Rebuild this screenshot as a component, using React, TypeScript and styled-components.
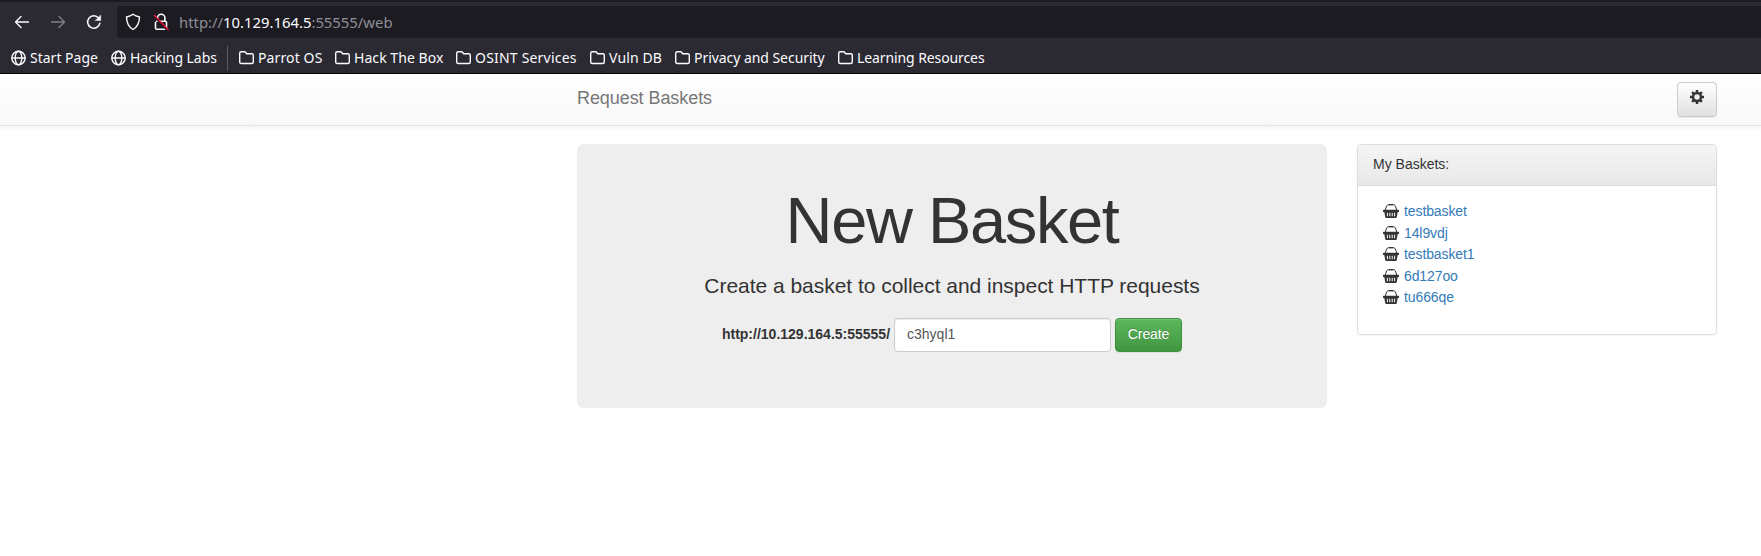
import React from "react";
import styled, { createGlobalStyle } from "styled-components";

const GlobalStyle = createGlobalStyle`
  * { box-sizing: border-box; }
  body {
    margin: 0;
    background: #fff;
    color: #333;
    font: 14px/20px "Liberation Sans", Arial, sans-serif;
    overflow: hidden;
  }
`;

const Page = styled.div`
  height: 556px;
  overflow: hidden;
`;

const Browser = styled.header`
  height: 74px;
  background: #2b2a33;
  border-top: 2px solid #1c1b22;
  border-bottom: 1px solid #0c0c0d;
  color: #fbfbfe;
  font-family: "Noto Sans", sans-serif;
`;

const Toolbar = styled.div`
  display: flex;
  align-items: center;
  height: 40px;
  padding: 0 0 0 14px;
`;

const NavIcon = styled.span<{ $dim?: boolean }>`
  display: flex;
  width: 16px;
  margin-right: 20px;
  opacity: ${(p) => (p.$dim ? 0.4 : 1)};
`;

const AddressBar = styled.div`
  display: flex;
  align-items: center;
  flex: 1;
  height: 32px;
  margin-left: -5px;
  padding-left: 8px;
  border-radius: 4px 0 0 4px;
  background: #1c1b22;
`;

const AddressIcon = styled.span`
  display: flex;
  margin-right: 12px;
`;

const Address = styled.span`
  margin-left: -2px;
  color: #8f8f96;
  font-size: 14.85px;
  line-height: 20px;
  white-space: nowrap;
`;

const Host = styled.span`
  color: #fbfbfe;
`;

const Bookmarks = styled.nav`
  display: flex;
  align-items: center;
  height: 31px;
  padding: 1px 0 0 11px;
`;

const Bookmark = styled.span<{ $width: number; $tracking?: number }>`
  display: flex;
  align-items: center;
  gap: 4px;
  flex: none;
  width: ${(p) => p.$width}px;
  font-size: 14px;
  letter-spacing: ${(p) => p.$tracking ?? 0}px;
  line-height: 20px;
  white-space: nowrap;
`;

const Divider = styled.span`
  width: 1px;
  height: 25px;
  margin-right: 11px;
  background: #5b5b66;
`;

const Navbar = styled.div`
  display: flex;
  justify-content: space-between;
  height: 52px;
  padding: 8px 44px 0 577px;
  border-bottom: 1px solid #e4e4e4;
  background: linear-gradient(#fff, #f8f8f8);
  box-shadow: 0 1px 5px rgba(0, 0, 0, 0.075);
`;

const Brand = styled.span`
  padding-top: 6px;
  color: #777;
  font-size: 18px;
  letter-spacing: -0.07px;
  line-height: 20px;
  text-shadow: 0 1px 0 rgba(255, 255, 255, 0.25);
`;

const SettingsButton = styled.button`
  display: flex;
  justify-content: center;
  width: 40px;
  height: 35px;
  padding: 7px 0 0;
  border: 1px solid #ccc;
  border-radius: 4px;
  background: linear-gradient(#fff, #e0e0e0);
  box-shadow: inset 0 1px 0 rgba(255, 255, 255, 0.15), 0 1px 1px rgba(0, 0, 0, 0.075);
`;

const Content = styled.main`
  display: flex;
  align-items: flex-start;
  gap: 30px;
  padding: 18px 44px 0 577px;
`;

const Jumbotron = styled.section`
  width: 750px;
  height: 264px;
  padding-top: 42px;
  border-radius: 6px;
  background: #eee;
  text-align: center;
`;

const Title = styled.h1`
  margin: 0;
  font-size: 65px;
  font-weight: 400;
  letter-spacing: -1.4px;
  line-height: 69px;
`;

const Lead = styled.p`
  margin: 16px 0 0;
  font-size: 21px;
  letter-spacing: -0.03px;
  line-height: 30px;
`;

const Form = styled.form`
  display: flex;
  justify-content: center;
  gap: 4px;
  margin-top: 17px;
`;

const Label = styled.label`
  font-weight: 700;
  line-height: 33px;
`;

const Input = styled.input`
  width: 217px;
  height: 34px;
  padding: 0 12px 2px;
  border: 1px solid #ccc;
  border-radius: 4px;
  background: #fff;
  box-shadow: inset 0 1px 1px rgba(0, 0, 0, 0.075);
  color: #555;
  font: inherit;
`;

const CreateButton = styled.button`
  width: 67px;
  height: 34px;
  padding: 0 0 2px;
  border: 1px solid #3e8f3e;
  border-radius: 4px;
  background: linear-gradient(#5cb85c, #419641);
  box-shadow: inset 0 1px 0 rgba(255, 255, 255, 0.15), 0 1px 1px rgba(0, 0, 0, 0.075);
  color: #fff;
  font: inherit;
  letter-spacing: -0.1px;
  text-shadow: 0 -1px 0 rgba(0, 0, 0, 0.2);
`;

const Panel = styled.aside`
  width: 360px;
  height: 191px;
  border: 1px solid #ddd;
  border-radius: 4px;
  box-shadow: 0 1px 2px rgba(0, 0, 0, 0.05);
`;

const PanelHeading = styled.div`
  height: 41px;
  padding: 9px 15px;
  border-bottom: 1px solid #ddd;
  border-radius: 3px 3px 0 0;
  background: linear-gradient(#f5f5f5, #e8e8e8);
`;

const BasketList = styled.ul`
  margin: 0;
  padding: 14px 0 0 25px;
  list-style: none;
`;

const BasketItem = styled.li`
  display: flex;
  align-items: flex-start;
  gap: 5px;
  height: 21.5px;

  svg {
    margin-top: 4px;
  }
`;

const BasketLink = styled.a`
  color: #337ab7;
  letter-spacing: -0.1px;
  line-height: 22px;
`;

const stroke = {
  fill: "none",
  stroke: "currentColor",
  strokeWidth: 1.4,
  strokeLinecap: "round" as const,
  strokeLinejoin: "round" as const,
};

const Arrow = ({ flip }: { flip?: boolean }) => (
  <svg width="16" height="16" viewBox="0 0 16 16" {...stroke}>
    <path d={flip ? "M1.5 8h13M9 2.5 14.5 8 9 13.5" : "M14.5 8h-13M7 2.5 1.5 8 7 13.5"} />
  </svg>
);

const Reload = () => (
  <svg width="16" height="16" viewBox="0 0 16 16" {...stroke}>
    <path d="M13.9 9.2A6.2 6.2 0 1 1 12.6 4" strokeWidth="1.5" />
    <path d="M14.7 1.3v5.2H9.5z" fill="currentColor" strokeWidth=".5" />
  </svg>
);

const Shield = () => (
  <svg width="16" height="18" viewBox="0 0 16 18" {...stroke}>
    <path d="M8 1.3c2 1.5 4 2.2 6.5 2.7-.1 5.5-1.2 9.5-6.5 12.5C2.7 13.5 1.6 9.5 1.5 4 4 3.5 6 2.8 8 1.3z" />
  </svg>
);

const Lock = () => (
  <svg width="16" height="18" viewBox="0 0 16 18" {...stroke}>
    <path
      d="M4.500 7.500V5a3.700 3.700 0 0 1 7.400 0v3M3.500 8.300h8.700q1.300 0 1.300 1.300v5.300q0 1.300-1.300 1.300H3.800q-1.300 0-1.300-1.300V9.500"
      strokeWidth="1.600"
    />
    <path d="M1.500 3.700 14 16.700" stroke="#1c1b22" strokeWidth="2" />
    <path d="M1.500 2.500 15 16.500" stroke="#e6103a" strokeWidth="1.600" />
  </svg>
);

const Globe = () => (
  <svg width="15" height="16" viewBox="0 0 15 16" {...stroke}>
    <circle cx="7.5" cy="8" r="6.7" />
    <ellipse cx="7.5" cy="8" rx="3.3" ry="6.7" />
    <path d="M1 8h13" />
  </svg>
);

const Folder = () => (
  <svg width="15" height="16" viewBox="0 0 15 16" {...stroke}>
    <path d="M2.200 1.700h3.300q.6 0 1 .5l1.200 1.500h5.100q1.500 0 1.500 1.500v6.800q0 1.500-1.500 1.500H2.200q-1.500 0-1.500-1.500V3.200q0-1.500 1.500-1.500z" />
  </svg>
);

const Gear = () => (
  <svg width="14" height="14" viewBox="0 0 14 14" fill="none" stroke="#333">
    <circle cx="7" cy="7" r="4" strokeWidth="2.5" />
    <g strokeWidth="2.5">
      <path d="M7 0v2.500M7 11.500V14M0 7h2.500M11.500 7H14" />
      <path d="m2.100 2.100 1.600 1.600m6.600 6.600 1.600 1.600m0-9.800-1.600 1.600m-6.600 6.600-1.600 1.600" />
    </g>
  </svg>
);

const Basket = () => (
  <svg width="16" height="14" viewBox="0 0 16 14">
    <path d="M2.300 6 3.600 1.800M13.700 6l-1.300-4.200M3.800 1.500 5.500.7M12.200 1.500 10.500.7" stroke="#333" strokeWidth="1" />
    <path d="M5.500.7h5" stroke="#333" strokeWidth="1.400" />
    <path
      fillRule="evenodd"
      fill="#333"
      d="M.5 5.700h15q.5 0 .5.500v1.200q0 .5-.5.500h-.8l-.9 5q-.2 1.100-1.200 1.100H3.400q-1 0-1.200-1.100l-.9-5H.5Q0 7.900 0 7.400V6.200q0-.5.500-.5zM3.900 8.800v3.500h1V8.800zm2.400 0v3.500h1V8.800zm2.400 0v3.500h1V8.800zm2.400 0v3.500h1V8.800z"
    />
  </svg>
);

const bookmarks = [
  { name: "Start Page", width: 100, globe: true },
  { name: "Hacking Labs", width: 116, globe: true, tracking: -0.05 },
  { name: "Parrot OS", width: 96, tracking: 0.12 },
  { name: "Hack The Box", width: 121, tracking: 0.06 },
  { name: "OSINT Services", width: 134, tracking: 0.2 },
  { name: "Vuln DB", width: 85, tracking: 0.12 },
  { name: "Privacy and Security", width: 163, tracking: -0.05 },
  { name: "Learning Resources", width: 150, tracking: -0.1 },
];

const baskets = ["testbasket", "14l9vdj", "testbasket1", "6d127oo", "tu666qe"];

export default function App() {
  return (
    <Page>
      <GlobalStyle />
      <Browser>
        <Toolbar>
          <NavIcon><Arrow /></NavIcon>
          <NavIcon $dim><Arrow flip /></NavIcon>
          <NavIcon><Reload /></NavIcon>
          <AddressBar>
            <AddressIcon><Shield /></AddressIcon>
            <AddressIcon><Lock /></AddressIcon>
            <Address>http://<Host>10.129.164.5</Host>:55555/web</Address>
          </AddressBar>
        </Toolbar>
        <Bookmarks>
          {bookmarks.map((b, i) => (
            <React.Fragment key={b.name}>
              {i === 2 && <Divider />}
              <Bookmark $width={b.width} $tracking={b.tracking}>
                {b.globe ? <Globe /> : <Folder />}
                {b.name}
              </Bookmark>
            </React.Fragment>
          ))}
        </Bookmarks>
      </Browser>
      <Navbar>
        <Brand>Request Baskets</Brand>
        <SettingsButton aria-label="Settings"><Gear /></SettingsButton>
      </Navbar>
      <Content>
        <Jumbotron>
          <Title>New Basket</Title>
          <Lead>Create a basket to collect and inspect HTTP requests</Lead>
          <Form>
            <Label htmlFor="basket">http://10.129.164.5:55555/</Label>
            <Input id="basket" defaultValue="c3hyql1" />
            <CreateButton type="button">Create</CreateButton>
          </Form>
        </Jumbotron>
        <Panel>
          <PanelHeading>My Baskets:</PanelHeading>
          <BasketList>
            {baskets.map((name) => (
              <BasketItem key={name}>
                <Basket />
                <BasketLink>{name}</BasketLink>
              </BasketItem>
            ))}
          </BasketList>
        </Panel>
      </Content>
    </Page>
  );
}
